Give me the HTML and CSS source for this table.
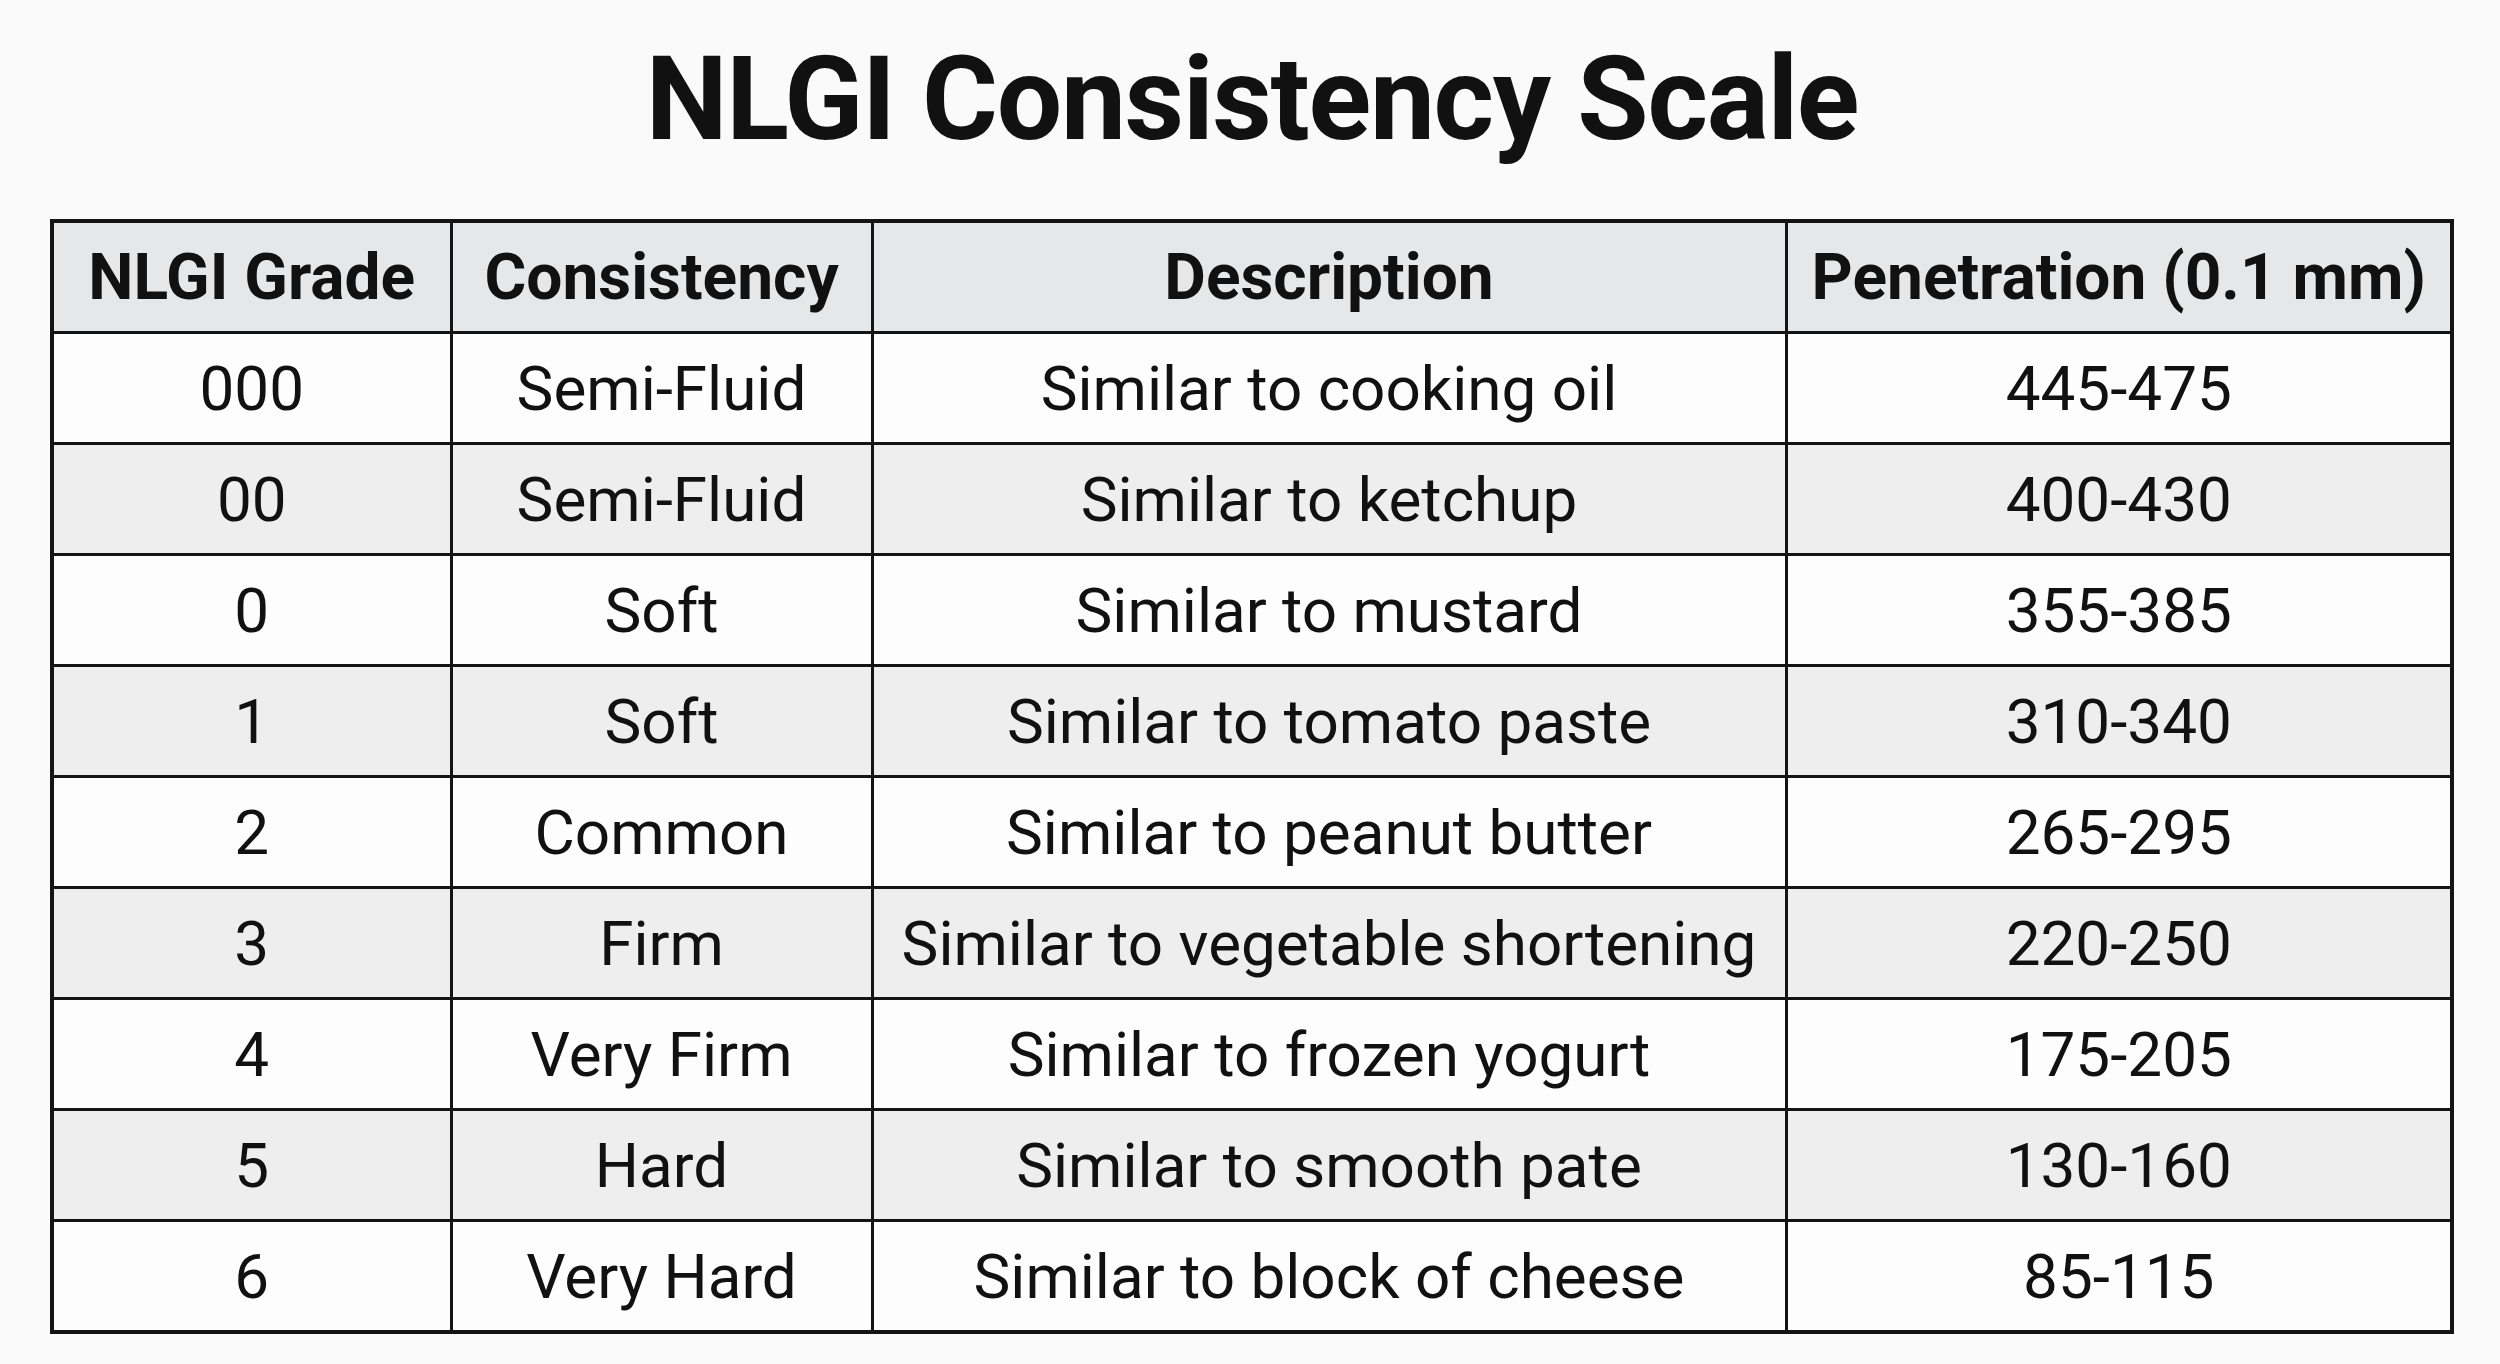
FILE: index.html
```html
<!DOCTYPE html>
<html lang="en">
<head>
<meta charset="utf-8">
<title>NLGI Consistency Scale</title>
<link rel="stylesheet" href="styles.css">
</head>
<body>
<main class="page">
  <h1 class="title">NLGI Consistency Scale</h1>
  <table class="scale">
    <colgroup>
      <col class="c-grade">
      <col class="c-cons">
      <col class="c-desc">
      <col class="c-pen">
    </colgroup>
    <thead>
      <tr><th>NLGI Grade</th><th>Consistency</th><th>Description</th><th>Penetration (0.1 mm)</th></tr>
    </thead>
    <tbody>
      <tr><td>000</td><td>Semi-Fluid</td><td>Similar to cooking oil</td><td>445-475</td></tr>
      <tr><td>00</td><td>Semi-Fluid</td><td>Similar to ketchup</td><td>400-430</td></tr>
      <tr><td>0</td><td>Soft</td><td>Similar to mustard</td><td>355-385</td></tr>
      <tr><td>1</td><td>Soft</td><td>Similar to tomato paste</td><td>310-340</td></tr>
      <tr><td>2</td><td>Common</td><td>Similar to peanut butter</td><td>265-295</td></tr>
      <tr><td>3</td><td>Firm</td><td>Similar to vegetable shortening</td><td>220-250</td></tr>
      <tr><td>4</td><td>Very Firm</td><td>Similar to frozen yogurt</td><td>175-205</td></tr>
      <tr><td>5</td><td>Hard</td><td>Similar to smooth pate</td><td>130-160</td></tr>
      <tr><td>6</td><td>Very Hard</td><td>Similar to block of cheese</td><td>85-115</td></tr>
    </tbody>
  </table>
</main>
</body>
</html>
```
FILE: styles.css
```css
html, body {
  margin: 0;
  padding: 0;
  background: #fafafa;
}
.page {
  display: flex;
  flex-direction: column;
  align-items: center;
  padding-top: 41px;
  padding-left: 4px;
  font-family: Roboto, "Liberation Sans", Arial, sans-serif;
  color: #111;
}
.title {
  margin: 0;
  font-size: 116px;
  line-height: 1;
  font-weight: 700;
  letter-spacing: -1.3px;
}
.scale {
  margin-top: 62px;
  width: 2400px;
  table-layout: fixed;
  border-collapse: collapse;
  border: 4px solid #141414;
  font-size: 62px;
}
.c-grade { width: 399px; }
.c-cons { width: 421px; }
.c-desc { width: 914px; }
.c-pen { width: 666px; }
.scale th, .scale td {
  border: 3px solid #141414;
  height: 108px;
  padding: 0;
  text-align: center;
  vertical-align: middle;
  white-space: nowrap;
}
.scale th {
  background: #e5e7e8;
  font-weight: 700;
  font-size: 64px;
}
.scale td {
  font-weight: 400;
}
.scale tbody tr:nth-child(odd) td { background: #fdfdfd; }
.scale tbody tr:nth-child(even) td { background: #eeeeee; }
```
